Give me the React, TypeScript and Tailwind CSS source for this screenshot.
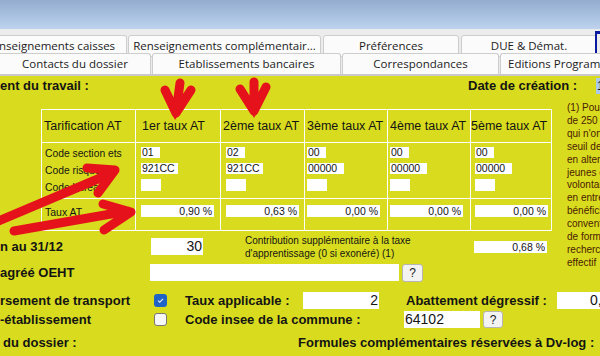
import React from 'react';

const tabText = "font-['Open_Sans',sans-serif] text-[11.5px] text-[#1b1b1b]";

const cols = [
  { head: '1er taux AT', sec: '01', risk: '921CC', taux: '0,90 %', pl: 'pl-[5px]', hp: 'pl-[6px]' },
  { head: '2ème taux AT', sec: '02', risk: '921CC', taux: '0,63 %', pl: 'pl-[5px]', hp: 'pl-[2px]' },
  { head: '3ème taux AT', sec: '00', risk: '00000', taux: '0,00 %', pl: 'pl-[2px]', hp: 'pl-[2px]' },
  { head: '4ème taux AT', sec: '00', risk: '00000', taux: '0,00 %', pl: 'pl-[2px]', hp: 'pl-[2px]' },
  { head: '5ème taux AT', sec: '00', risk: '00000', taux: '0,00 %', pl: 'pl-[4px]', hp: 'pl-0' },
];

const widths = ['w-[85px]', 'w-[84px]', 'w-[83px]', 'w-[83px]', 'w-[81px]'];

const footnote = [
  '(1) Pour les entreprises',
  'de 250 salariés et plus',
  "qui n'ont pas atteint le",
  'seuil de salariés',
  'en alternance,',
  'jeunes en',
  'volontariat',
  'en entreprise,',
  'bénéficiant',
  'convention',
  'de formation,',
  'recherche,',
  'effectif',
];

function HelpButton({ w, h }: { w: string; h: string }) {
  return (
    <button className={`${w} ${h} flex items-center justify-center rounded-[3px] border border-[#b5b5b5] bg-[#f3f3f3] text-[12px] text-[#222]`}>
      ?
    </button>
  );
}

export default function App() {
  return (
    <div className="relative w-[600px] h-[356px] overflow-hidden bg-[#d9dc1e] font-['Liberation_Sans',Arial,sans-serif] text-[#141414]">
      {/* window header */}
      <div className="h-[29px] bg-gradient-to-b from-[#93accf] to-[#bdd3ee]" />
      <div className="h-[6px] bg-[#ececec]" />

      {/* tabs */}
      <div className="bg-[#ececec]">
        <div className="flex h-[18px] items-start">
          <div className={`shrink-0 w-[127px] h-[22px] flex items-center border border-l-0 border-[#cdcdcd] rounded-tr-[3px] bg-[#fbfbfb] ${tabText}`}>
            <span className="-ml-[1px]">nseignements caisses</span>
          </div>
          <div className={`shrink-0 ml-[1px] w-[193px] h-[22px] flex items-center justify-center border border-[#cdcdcd] rounded-t-[3px] bg-[#fbfbfb] ${tabText}`}>
            Renseignements complémentair...
          </div>
          <div className={`shrink-0 ml-[2px] w-[136px] h-[22px] flex items-center justify-center border border-[#cdcdcd] rounded-t-[3px] bg-[#fbfbfb] ${tabText}`}>
            Préférences
          </div>
          <div className={`shrink-0 ml-[2px] w-[136px] h-[22px] flex items-center justify-center border border-[#cdcdcd] rounded-t-[3px] bg-[#fbfbfb] ${tabText}`}>
            DUE &amp; Démat.
          </div>
        </div>
        <div className="relative flex h-[21px] items-start">
          <div className={`shrink-0 w-[151px] h-[21px] flex items-center justify-center border border-l-0 border-b-0 border-[#cdcdcd] rounded-tr-[3px] bg-[#fbfbfb] ${tabText}`}>
            Contacts du dossier
          </div>
          <div className={`shrink-0 ml-[1px] w-[189px] h-[21px] flex items-center justify-center border border-b-0 border-[#cdcdcd] rounded-t-[3px] bg-[#fbfbfb] ${tabText}`}>
            Etablissements bancaires
          </div>
          <div className={`shrink-0 ml-[1px] w-[157px] h-[21px] flex items-center justify-center border border-b-0 border-[#cdcdcd] rounded-t-[3px] bg-[#fbfbfb] ${tabText}`}>
            Correspondances
          </div>
          <div className={`shrink-0 ml-[1px] w-[120px] h-[21px] flex items-center border border-r-0 border-b-0 border-[#cdcdcd] rounded-tl-[3px] bg-[#fbfbfb] whitespace-nowrap ${tabText}`}>
            <span className="pl-[7px]">Editions Programmées</span>
          </div>
        </div>
        <div className="h-[2px] bg-[#c9c9c9]" />
      </div>

      {/* title row */}
      <div className="flex h-[20px] items-center text-[13px] font-bold">
        <span className="shrink-0 w-[468px]">ent du travail :</span>
        <span className="shrink-0 w-[128px]">Date de création :</span>
        <span className="shrink-0 h-[16px] w-[10px] bg-[#a9c9ee] text-[12px] font-normal leading-[16px] pl-[1px]">1</span>
      </div>

      {/* table + footnote */}
      <div className="mt-[13px] flex h-[121px] items-start">
        <table className="ml-[41px] w-[510px] shrink-0 table-fixed border-collapse border border-white">
          <colgroup>
            <col className="w-[94px]" />
            <col className="w-[85px]" />
            <col className="w-[84px]" />
            <col className="w-[83px]" />
            <col className="w-[83px]" />
            <col className="w-[81px]" />
          </colgroup>
          <tbody>
            <tr className="h-[33px]">
              <td className="border border-white pl-[2px] text-[12.5px] whitespace-nowrap">Tarification AT</td>
              {cols.map((c, i) => (
                <td key={i} className={`${widths[i]} border border-white text-[12.5px] whitespace-nowrap overflow-hidden ${c.hp}`}>
                  {c.head}
                </td>
              ))}
            </tr>
            <tr className="h-[56px]">
              <td className="border border-white align-top pl-[3px] pt-[2px] text-[10.3px] leading-[17px] whitespace-nowrap">
                <div>Code section ets</div>
                <div>Code risque</div>
                <div>Code bureau</div>
              </td>
              {cols.map((c, i) => (
                <td key={i} className={`border border-white align-top pt-[4px] ${c.pl}`}>
                  <div className="flex flex-col gap-[5px] text-[10.5px] leading-[11px]">
                    <div className="h-[11px] w-[19px] bg-white pl-[1px]">{c.sec}</div>
                    <div className="h-[11px] w-[37px] bg-white pl-[1px]">{c.risk}</div>
                    <div className="h-[12px] w-[20px] bg-white" />
                  </div>
                </td>
              ))}
            </tr>
            <tr className="h-[32px]">
              <td className="border border-white align-top pl-[3px] pt-[7px] text-[10.5px] leading-[12px]">Taux AT</td>
              {cols.map((c, i) => (
                <td key={i} className={`border border-white align-top pt-[6px] ${c.pl}`}>
                  <div className="h-[12px] w-[73px] bg-white pr-[2px] text-right text-[10.5px] leading-[12px]">{c.taux}</div>
                </td>
              ))}
            </tr>
          </tbody>
        </table>
        <div className="ml-[15px] -mt-[7px] shrink-0 whitespace-nowrap text-[10px] leading-[12.9px] text-[#4a2004]">
          {footnote.map((l, i) => (
            <div key={i}>{l}</div>
          ))}
        </div>
      </div>

      {/* row: au 31/12 */}
      <div className="mt-[3px] flex h-[27px] items-center">
        <span className="shrink-0 w-[151px] text-[13px] font-bold">n au 31/12</span>
        <div className="shrink-0 h-[17px] w-[52px] bg-white pr-[1px] text-right text-[14px] leading-[17px]">30</div>
        <div className="shrink-0 ml-[42px] w-[229px] text-[10px] leading-[13px] whitespace-nowrap">
          <div>Contribution supplémentaire à la taxe</div>
          <div>d'apprentissage (0 si exonéré) (1)</div>
        </div>
        <div className="shrink-0 h-[12px] w-[73px] bg-white pr-[2px] text-right text-[10.5px] leading-[12px]">0,68 %</div>
      </div>

      {/* row: OEHT */}
      <div className="mt-[3px] flex h-[19px] items-center">
        <span className="shrink-0 w-[150px] text-[13px] font-bold">agréé OEHT</span>
        <div className="shrink-0 h-[17px] w-[249px] bg-white" />
        <div className="ml-[3px]">
          <HelpButton w="w-[21px]" h="h-[18px]" />
        </div>
      </div>

      {/* row: transport */}
      <div className="mt-[9px] flex h-[19px] items-center whitespace-nowrap">
        <span className="shrink-0 w-[154px] text-[13px] font-bold">rsement de transport</span>
        <span className="shrink-0 flex h-[13px] w-[13px] items-center justify-center rounded-[3px] bg-[#1f63c6]">
          <svg width="9" height="9" viewBox="0 0 9 9">
            <path d="M2 4.6 L3.8 6.2 L7 2.8" stroke="#dfe9f7" strokeWidth="1.2" fill="none" />
          </svg>
        </span>
        <span className="shrink-0 ml-[18px] w-[118px] text-[13px] font-bold">Taux applicable :</span>
        <div className="shrink-0 h-[17px] w-[76px] bg-white pr-[1px] text-right text-[14px] leading-[17px]">2</div>
        <span className="shrink-0 ml-[27px] w-[151px] text-[13px] font-bold">Abattement dégressif :</span>
        <div className="shrink-0 h-[17px] w-[60px] bg-white pl-[33px] text-[14px] leading-[17px]">0,00</div>
      </div>

      {/* row: établissement */}
      <div className="flex h-[19px] items-center whitespace-nowrap">
        <span className="shrink-0 w-[154px] text-[13px] font-bold">-établissement</span>
        <span className="shrink-0 h-[13px] w-[13px] rounded-[3px] border border-[#777] bg-[#f7f7f7]" />
        <span className="shrink-0 ml-[18px] w-[219px] text-[13px] font-bold">Code insee de la commune :</span>
        <div className="shrink-0 h-[17px] w-[76px] bg-white pl-[1px] text-[14px] leading-[17px]">64102</div>
        <div className="ml-[3px]">
          <HelpButton w="w-[20px]" h="h-[17px]" />
        </div>
      </div>

      {/* row: dossier */}
      <div className="mt-[5px] flex h-[17px] items-center whitespace-nowrap text-[13px] font-bold">
        <span className="shrink-0 w-[298px] pl-[3px]">du dossier :</span>
        <span className="shrink-0">Formules complémentaires réservées à Dv-log :</span>
      </div>

      {/* window corner mark */}
      <div className="absolute left-[595px] top-[31px] h-[22px] w-[6px] border-l-2 border-t-[3px] border-[#0a1a9e]" />

      {/* red annotation arrows */}
      <svg className="pointer-events-none absolute left-0 top-0" width="600" height="356">
        <g stroke="#e5121b" strokeWidth="9" strokeLinecap="round" strokeLinejoin="round" fill="none">
          <path d="M180 83 L176 113 M165 90 L176 113 M191 90 L176 113" />
          <path d="M254 82 L254 111 M240 89 L254 111 M266 87 L254 111" />
          <path d="M-6 223 L112 173 M87 168 L115 170 L98 193" />
          <path d="M14 231 L128 211 M103 204 L131 212 L104 230" />
        </g>
        <g fill="#e5121b">
          <path d="M168 106 L184 106 L175 120 Z" />
          <path d="M246 104 L262 104 L254 118 Z" />
        </g>
      </svg>
    </div>
  );
}
